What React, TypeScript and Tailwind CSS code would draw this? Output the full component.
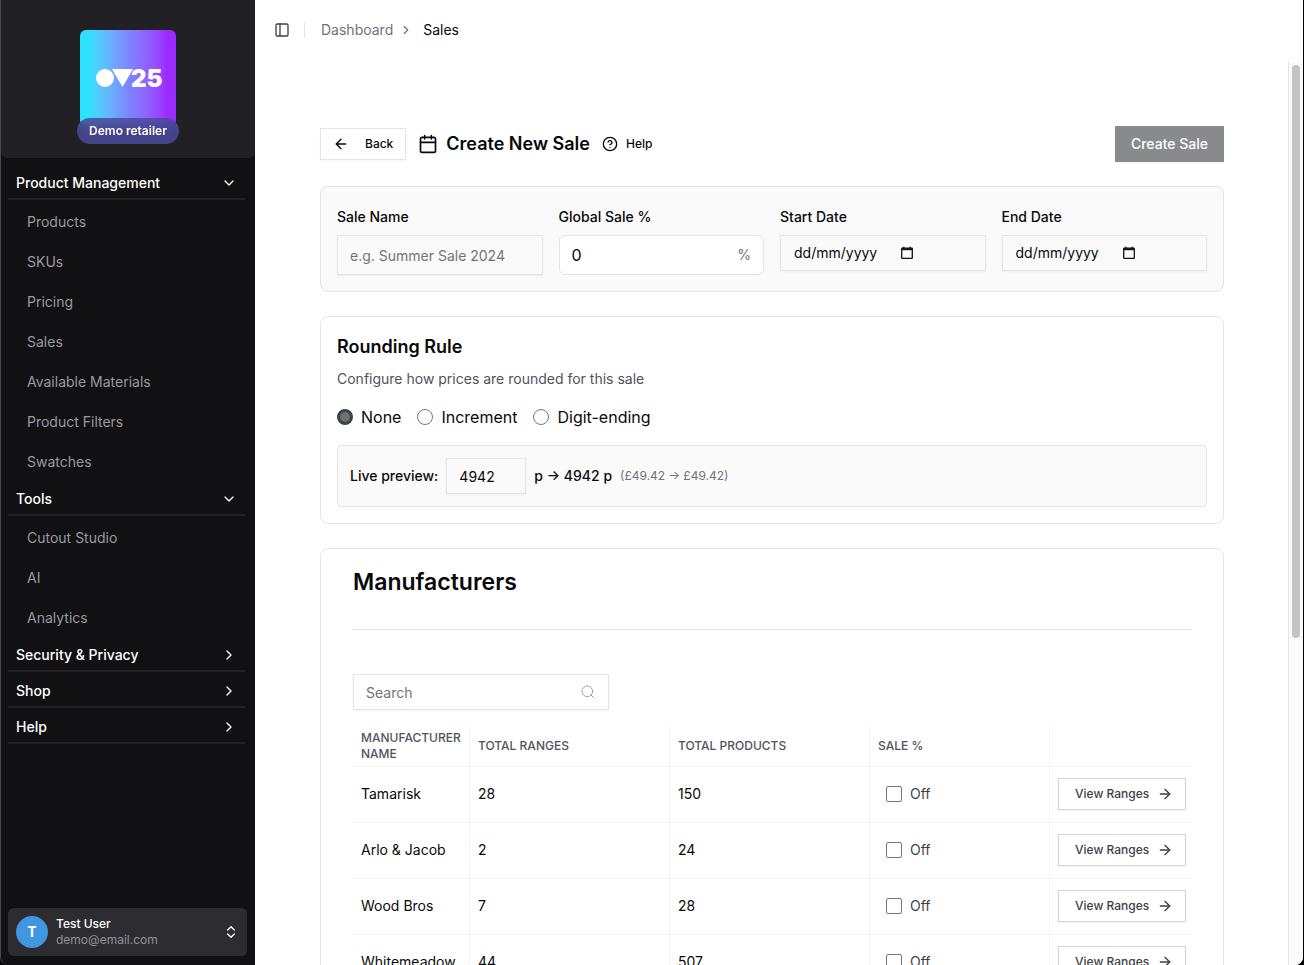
import React, { useState } from 'react';
import {
  ArrowLeft,
  ArrowRight,
  Calendar,
  ChevronDown,
  ChevronRight,
  ChevronsUpDown,
  CircleHelp,
  PanelLeft,
  Search,
} from 'lucide-react';

const navGroups: { title: string; items: string[] }[] = [
  {
    title: 'Product Management',
    items: ['Products', 'SKUs', 'Pricing', 'Sales', 'Available Materials', 'Product Filters', 'Swatches'],
  },
  { title: 'Tools', items: ['Cutout Studio', 'AI', 'Analytics'] },
  { title: 'Security & Privacy', items: [] },
  { title: 'Shop', items: [] },
  { title: 'Help', items: [] },
];

const manufacturers = [
  { name: 'Tamarisk', ranges: 28, products: 150 },
  { name: 'Arlo & Jacob', ranges: 2, products: 24 },
  { name: 'Wood Bros', ranges: 7, products: 28 },
  { name: 'Whitemeadow', ranges: 44, products: 507 },
];

const roundingRules = ['None', 'Increment', 'Digit-ending'];

const Logo: React.FC = () => (
  <div className="flex size-24 items-center justify-center rounded-md bg-linear-to-r from-[#2fe0ff] from-10% via-[#7b86ff] via-50% to-[#9c2bff] to-90%">
    <svg width="72" height="32" viewBox="-3 -6 72 32" fill="#fff" role="img" aria-label="OV25">
      <circle cx="10" cy="10" r="9" />
      <path d="M17 1h21L27.500 19z" />
      <text x="36" y="19" fontFamily="Inter, sans-serif" fontWeight="900" fontSize="24">
        25
      </text>
    </svg>
  </div>
);

const Sidebar: React.FC = () => (
  <aside className="flex w-64 shrink-0 flex-col rounded-bl-lg border-r border-l border-r-white border-l-[#47494f] bg-[#111113]">
    <div className="flex flex-col items-center rounded-b-md bg-[#212024] pt-[30px] pb-[14px]">
      <Logo />
      <span className="-mt-2 flex h-[26px] items-center rounded-full bg-[#4a4a9c]/85 px-3 text-xs font-semibold text-white backdrop-blur-xs">
        Demo retailer
      </span>
    </div>

    <nav className="flex-1 pt-2 pr-[10px] pl-[7px] text-sm">
      {navGroups.map((group) => {
        const open = group.items.length > 0;
        const Chevron = open ? ChevronDown : ChevronRight;
        return (
          <div key={group.title}>
            <button
              type="button"
              aria-expanded={open}
              className="mb-[2px] flex h-[34px] w-full items-center justify-between border-b-2 border-[#212124] px-2 pt-px font-medium text-white"
            >
              {group.title}
              <Chevron size={16} />
            </button>
            {group.items.map((item) => (
              <a key={item} href="#" className="flex h-10 items-center pl-[19px] text-[#99999f]">
                {item}
              </a>
            ))}
          </div>
        );
      })}
    </nav>

    <button
      type="button"
      className="mr-2 mb-[9px] ml-[7px] flex h-12 items-center gap-2 rounded-md bg-[#2d2c31] px-2 text-left text-xs"
    >
      <span className="flex size-8 items-center justify-center rounded-full bg-[#4196e0] text-sm font-bold text-white">
        T
      </span>
      <span className="flex-1">
        <span className="block font-medium text-white">Test User</span>
        <span className="block text-[#93939a]">demo@email.com</span>
      </span>
      <ChevronsUpDown size={16} className="text-white" />
    </button>
  </aside>
);

const labelCls = 'mb-[6px] block pt-[2px] text-sm leading-6 font-medium';

const DateField: React.FC<{ id: string; label: string }> = ({ id, label }) => (
  <div>
    <label htmlFor={id} className={labelCls}>
      {label}
    </label>
    <div className="flex h-9 items-center border border-zinc-200 px-[13px] shadow-xs">
      <input
        id={id}
        placeholder="dd/mm/yyyy"
        className="w-[106px] bg-transparent text-sm outline-none placeholder:text-zinc-950"
      />
      <button type="button" aria-label={`Pick ${label.toLowerCase()}`}>
        <svg width="14" height="14" viewBox="0 0 14 14" fill="none" stroke="#111" strokeWidth="1.300">
          <rect x="1.700" y="2.200" width="10.600" height="10.100" rx="0.600" />
          <path d="M1.700 3.200h10.600" strokeWidth="2" />
          <path d="M3.800 0.700v2M10.200 0.700v2" />
        </svg>
      </button>
    </div>
  </div>
);

const SaleDetails: React.FC = () => (
  <section className="grid grid-cols-4 gap-4 rounded-lg border border-zinc-200 bg-[#fafafa] p-4">
    <div>
      <label htmlFor="sale-name" className={labelCls}>
        Sale Name
      </label>
      <input
        id="sale-name"
        placeholder="e.g. Summer Sale 2024"
        className="h-10 w-full border border-zinc-200 px-3 pt-px text-sm shadow-xs outline-none placeholder:text-[#737378]"
      />
    </div>
    <div>
      <label htmlFor="global-sale" className={labelCls}>
        Global Sale %
      </label>
      <div className="flex h-10 items-center rounded-md border border-zinc-200 bg-white px-3">
        <input id="global-sale" defaultValue="0" className="w-0 flex-1 text-base outline-none" />
        <span className="text-sm text-zinc-500">%</span>
      </div>
    </div>
    <DateField id="start-date" label="Start Date" />
    <DateField id="end-date" label="End Date" />
  </section>
);

const RoundingRule: React.FC = () => {
  const [rule, setRule] = useState('None');

  return (
    <section className="rounded-lg border border-zinc-200 p-4">
      <h2 className="text-lg leading-7 font-semibold">Rounding Rule</h2>
      <p className="mt-2 text-sm text-zinc-600">Configure how prices are rounded for this sale</p>
      <div className="mt-4 flex gap-4">
        {roundingRules.map((name) => (
          <label key={name} className="flex items-center gap-2 text-base">
            <input
              type="radio"
              name="rounding"
              checked={rule === name}
              onChange={() => setRule(name)}
              className="size-4 appearance-none rounded-full border border-[#767676] bg-white checked:border-3 checked:border-[#3d4248] checked:bg-[#6d736f]"
            />
            {name}
          </label>
        ))}
      </div>
      <div className="mt-4 flex items-center gap-2 rounded border border-zinc-200 bg-[#fafafa] p-3 text-sm">
        <label htmlFor="preview" className="font-medium">
          Live preview:
        </label>
        <input
          id="preview"
          defaultValue="4942"
          className="h-9 w-20 border border-zinc-200 px-3 pt-px text-sm shadow-xs outline-none"
        />
        <span className="font-medium">p → 4942 p</span>
        <span className="text-xs text-zinc-500">(£49.42 → £49.42)</span>
      </div>
    </section>
  );
};

const thCls = 'border-r border-b border-zinc-100 px-2 text-left font-medium';
const tdCls = 'border-r border-b border-zinc-100 px-2 pb-px';

const Manufacturers: React.FC = () => (
  <section className="rounded-lg border border-zinc-200 px-8 pt-[17px] pb-8">
    <h2 className="border-b border-zinc-200 pb-[31px] text-[23px] leading-8 font-semibold">Manufacturers</h2>
    <div className="mt-11 flex h-9 w-64 items-center border border-zinc-200 px-3 shadow-xs">
      <input
        aria-label="Search"
        placeholder="Search"
        className="w-0 flex-1 pt-[2px] text-sm outline-none placeholder:text-[#737378]"
      />
      <Search size={16} strokeWidth={1.5} className="text-zinc-400" />
    </div>

    <table className="mt-4 w-full table-fixed border-separate border-spacing-0 text-sm">
      <colgroup>
        <col className="w-[117px]" />
        <col className="w-[200px]" />
        <col className="w-[200px]" />
        <col className="w-[180px]" />
        <col />
      </colgroup>
      <thead className="text-xs text-zinc-600 uppercase">
        <tr className="h-[41px]">
          <th className={thCls}>Manufacturer Name</th>
          <th className={thCls}>Total Ranges</th>
          <th className={thCls}>Total Products</th>
          <th className={thCls}>Sale %</th>
          <th aria-label="Actions" className="border-b border-zinc-100" />
        </tr>
      </thead>
      <tbody>
        {manufacturers.map((m) => (
          <tr key={m.name} className="h-14">
            <td className={tdCls}>{m.name}</td>
            <td className={tdCls}>{m.ranges}</td>
            <td className={tdCls}>{m.products}</td>
            <td className={tdCls}>
              <label className="flex items-center gap-2 pl-2 text-zinc-700">
                <input type="checkbox" className="size-4 appearance-none rounded-xs border border-[#767676] bg-white checked:bg-zinc-700" />
                Off
              </label>
            </td>
            <td className="border-b border-zinc-100 px-2 pb-px">
              <button
                type="button"
                className="flex h-8 w-32 items-center justify-between border border-zinc-300 pr-3 pl-4 text-xs font-medium text-zinc-700 shadow-xs"
              >
                View Ranges
                <ArrowRight size={16} />
              </button>
            </td>
          </tr>
        ))}
      </tbody>
    </table>
  </section>
);

export default function App() {
  return (
    <div className="flex h-screen overflow-hidden bg-black font-['Inter',sans-serif] text-zinc-950">
      <Sidebar />
      <div className="mr-px flex min-w-0 flex-1 flex-col overflow-hidden rounded-br-lg bg-white">
        <header className="flex h-[62px] shrink-0 items-center pb-[2px] pl-[18px] text-sm">
          <button type="button" aria-label="Toggle sidebar" className="text-zinc-700">
            <PanelLeft size={16} />
          </button>
          <span className="mr-4 ml-[14px] h-4 w-px bg-zinc-200" />
          <nav aria-label="Breadcrumb" className="flex items-center">
            <a href="#" className="text-zinc-500">Dashboard</a>
            <ChevronRight size={14} className="mr-[10px] ml-[6px] text-zinc-500" />
            <span>Sales</span>
          </nav>
        </header>

        <div className="flex min-h-0 flex-1">
          <main className="min-w-0 flex-1 space-y-6 overflow-y-auto px-16 pt-16 pb-16 [scrollbar-width:none]">
            <div className="flex h-9 items-center">
              <button
                type="button"
                className="flex h-8 items-center gap-4 border border-zinc-200 px-3 text-xs font-medium shadow-xs"
              >
                <ArrowLeft size={16} />
                Back
              </button>
              <Calendar size={20} className="ml-3" />
              <h1 className="ml-2 text-lg font-semibold">Create New Sale</h1>
              <button type="button" className="ml-3 flex items-center gap-2 text-xs font-medium">
                <CircleHelp size={16} />
                Help
              </button>
              <button
                type="button"
                className="ml-auto h-9 bg-[#898a8c] px-4 text-sm font-medium text-white shadow-xs"
              >
                Create Sale
              </button>
            </div>
            <SaleDetails />
            <RoundingRule />
            <Manufacturers />
          </main>
          <div aria-hidden="true" className="w-[15px] shrink-0 border-l border-zinc-200 bg-[#fafafa] px-[3px] pt-[3px]">
            <div className="h-[573px] rounded-full bg-[#c4c4c4]" />
          </div>
        </div>
      </div>
    </div>
  );
}
